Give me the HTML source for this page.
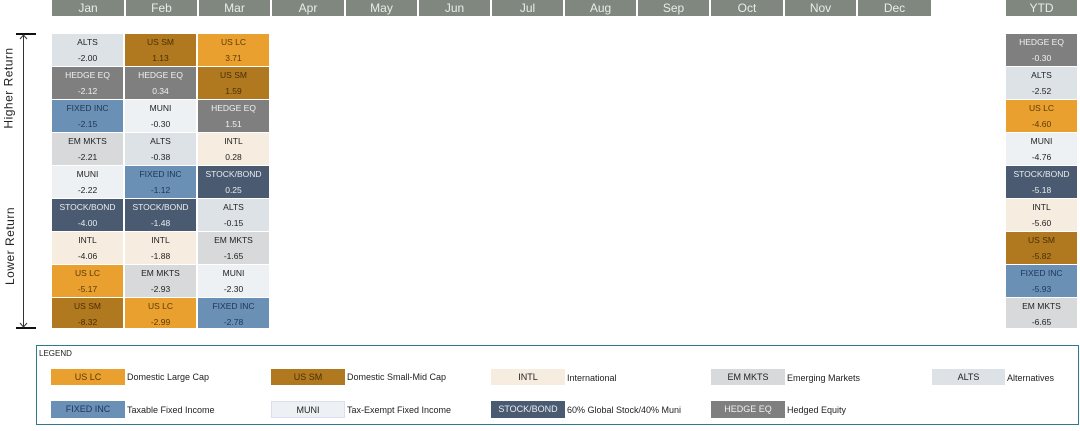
<!DOCTYPE html><html><head><style>
*{margin:0;padding:0;box-sizing:border-box}
body{width:1080px;height:431px;background:#fff;position:relative;font-family:"Liberation Sans",sans-serif;overflow:hidden}
.h{position:absolute;top:0;height:16px;background:#7f877f;color:#e8ece8;font-size:12px;text-align:center;line-height:16px}
.c{position:absolute;width:72px;height:33px;font-size:8.5px;text-align:center;border-right:1px solid #fff;border-bottom:1px solid #fff}
.c span{display:block;height:16px;line-height:17px}
.lc{background:#e9a02f;color:#5a3a08}.sm{background:#b0791f;color:#4a2e05}.he{background:#7f7f7f;color:#f0f0f0}
.fi{background:#6b90b6;color:#1e3556}.mu{background:#edf1f4;color:#222}.al{background:#dde2e7;color:#222}
.em{background:#d8d9da;color:#222}.in{background:#f6ede0;color:#222}.sb{background:#4a5a70;color:#e8ecf0}
.sw{position:absolute;height:16px;width:74px;font-size:9px;text-align:center;line-height:16px}
.lt{position:absolute;font-size:9px;line-height:16px;color:#222}
.v{position:absolute;font-size:12px;color:#222;transform:rotate(-90deg);white-space:nowrap;letter-spacing:0.5px}
</style></head><body>
<div class="h" style="left:52px;width:72px">Jan</div>
<div class="h" style="left:126px;width:71px">Feb</div>
<div class="h" style="left:199px;width:71px">Mar</div>
<div class="h" style="left:272px;width:72px">Apr</div>
<div class="h" style="left:346px;width:71px">May</div>
<div class="h" style="left:419px;width:71px">Jun</div>
<div class="h" style="left:492px;width:71px">Jul</div>
<div class="h" style="left:565px;width:71px">Aug</div>
<div class="h" style="left:638px;width:71px">Sep</div>
<div class="h" style="left:711px;width:72px">Oct</div>
<div class="h" style="left:785px;width:71px">Nov</div>
<div class="h" style="left:858px;width:73px">Dec</div>
<div class="h" style="left:1006px;width:71px">YTD</div>

<svg style="position:absolute;left:0;top:0" width="40" height="335">
<line x1="23.5" y1="34" x2="23.5" y2="328" stroke="#333" stroke-width="1"/>
<line x1="16" y1="34" x2="36" y2="34" stroke="#111" stroke-width="2"/>
<line x1="16" y1="328" x2="36" y2="328" stroke="#111" stroke-width="2"/>
<polyline points="20,39 23.5,35 27,39" fill="none" stroke="#333" stroke-width="1"/>
<polyline points="20,323 23.5,327 27,323" fill="none" stroke="#333" stroke-width="1"/>
</svg>
<div class="v" style="left:-32px;top:81px">Higher Return</div>
<div class="v" style="left:-29px;top:239px">Lower Return</div>

<div class="c al" style="left:52px;top:34px"><span>ALTS</span><span>-2.00</span></div>
<div class="c he" style="left:52px;top:67px"><span>HEDGE EQ</span><span>-2.12</span></div>
<div class="c fi" style="left:52px;top:100px"><span>FIXED INC</span><span>-2.15</span></div>
<div class="c em" style="left:52px;top:133px"><span>EM MKTS</span><span>-2.21</span></div>
<div class="c mu" style="left:52px;top:166px"><span>MUNI</span><span>-2.22</span></div>
<div class="c sb" style="left:52px;top:199px"><span>STOCK/BOND</span><span>-4.00</span></div>
<div class="c in" style="left:52px;top:232px"><span>INTL</span><span>-4.06</span></div>
<div class="c lc" style="left:52px;top:265px"><span>US LC</span><span>-5.17</span></div>
<div class="c sm" style="left:52px;top:298px;height:31px"><span>US SM</span><span>-8.32</span></div>

<div class="c sm" style="left:125px;top:34px"><span>US SM</span><span>1.13</span></div>
<div class="c he" style="left:125px;top:67px"><span>HEDGE EQ</span><span>0.34</span></div>
<div class="c mu" style="left:125px;top:100px"><span>MUNI</span><span>-0.30</span></div>
<div class="c al" style="left:125px;top:133px"><span>ALTS</span><span>-0.38</span></div>
<div class="c fi" style="left:125px;top:166px"><span>FIXED INC</span><span>-1.12</span></div>
<div class="c sb" style="left:125px;top:199px"><span>STOCK/BOND</span><span>-1.48</span></div>
<div class="c in" style="left:125px;top:232px"><span>INTL</span><span>-1.88</span></div>
<div class="c em" style="left:125px;top:265px"><span>EM MKTS</span><span>-2.93</span></div>
<div class="c lc" style="left:125px;top:298px;height:31px"><span>US LC</span><span>-2.99</span></div>

<div class="c lc" style="left:198px;top:34px"><span>US LC</span><span>3.71</span></div>
<div class="c sm" style="left:198px;top:67px"><span>US SM</span><span>1.59</span></div>
<div class="c he" style="left:198px;top:100px"><span>HEDGE EQ</span><span>1.51</span></div>
<div class="c in" style="left:198px;top:133px"><span>INTL</span><span>0.28</span></div>
<div class="c sb" style="left:198px;top:166px"><span>STOCK/BOND</span><span>0.25</span></div>
<div class="c al" style="left:198px;top:199px"><span>ALTS</span><span>-0.15</span></div>
<div class="c em" style="left:198px;top:232px"><span>EM MKTS</span><span>-1.65</span></div>
<div class="c mu" style="left:198px;top:265px"><span>MUNI</span><span>-2.30</span></div>
<div class="c fi" style="left:198px;top:298px;height:31px"><span>FIXED INC</span><span>-2.78</span></div>

<div class="c he" style="left:1006px;top:34px"><span>HEDGE EQ</span><span>-0.30</span></div>
<div class="c al" style="left:1006px;top:67px"><span>ALTS</span><span>-2.52</span></div>
<div class="c lc" style="left:1006px;top:100px"><span>US LC</span><span>-4.60</span></div>
<div class="c mu" style="left:1006px;top:133px"><span>MUNI</span><span>-4.76</span></div>
<div class="c sb" style="left:1006px;top:166px"><span>STOCK/BOND</span><span>-5.18</span></div>
<div class="c in" style="left:1006px;top:199px"><span>INTL</span><span>-5.60</span></div>
<div class="c sm" style="left:1006px;top:232px"><span>US SM</span><span>-5.82</span></div>
<div class="c fi" style="left:1006px;top:265px"><span>FIXED INC</span><span>-5.93</span></div>
<div class="c em" style="left:1006px;top:298px;height:31px"><span>EM MKTS</span><span>-6.65</span></div>

<div style="position:absolute;left:36px;top:345px;width:1043px;height:80px;border:1px solid #2b7b8c"></div>
<div class="lt" style="left:39px;top:346px;font-size:8px">LEGEND</div>
<div class="sw lc" style="left:51px;top:369px">US LC</div><div class="lt" style="left:127px;top:369px">Domestic Large Cap</div>
<div class="sw sm" style="left:271px;top:369px">US SM</div><div class="lt" style="left:347px;top:369px">Domestic Small-Mid Cap</div>
<div class="sw in" style="left:491px;top:369px">INTL</div><div class="lt" style="left:567px;top:370px">International</div>
<div class="sw em" style="left:711px;top:369px">EM MKTS</div><div class="lt" style="left:787px;top:370px">Emerging Markets</div>
<div class="sw al" style="left:932px;top:369px;width:73px">ALTS</div><div class="lt" style="left:1007px;top:370px">Alternatives</div>
<div class="sw fi" style="left:51px;top:401px;height:17px">FIXED INC</div><div class="lt" style="left:127px;top:402px">Taxable Fixed Income</div>
<div class="sw mu" style="left:271px;top:401px;height:17px;border:1px solid #dde">MUNI</div><div class="lt" style="left:347px;top:402px">Tax-Exempt Fixed Income</div>
<div class="sw sb" style="left:491px;top:401px;height:17px">STOCK/BOND</div><div class="lt" style="left:567px;top:402px">60% Global Stock/40% Muni</div>
<div class="sw he" style="left:711px;top:401px;height:17px">HEDGE EQ</div><div class="lt" style="left:787px;top:402px">Hedged Equity</div>
</body></html>
